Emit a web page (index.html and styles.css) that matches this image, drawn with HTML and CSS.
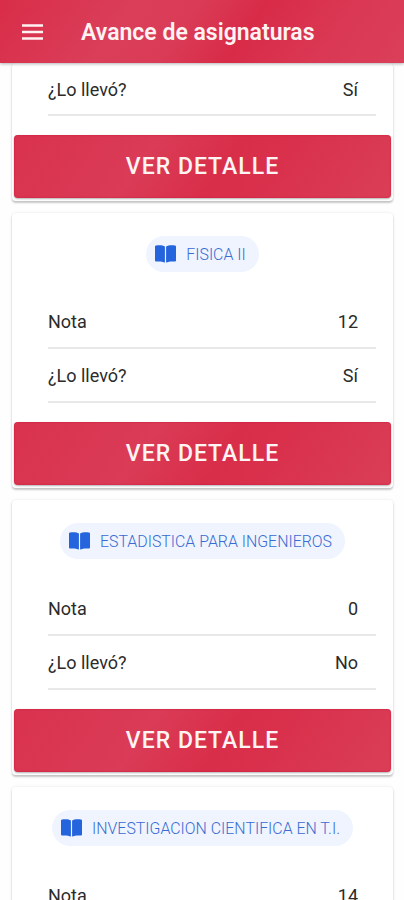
FILE: index.html
```
<!DOCTYPE html>
<html lang="es">
<head>
<meta charset="utf-8">
<title>Avance de asignaturas</title>
<link rel="stylesheet" href="styles.css">
</head>
<body>
<svg width="0" height="0" class="defs"><symbol id="book" viewBox="0 0 21 18"><path d="M0 1.600Q0 .6 1.100.5C4.500 0 8 .2 9.900 1.500V17.600C7.500 16.400 4.500 16.200 1 16.500Q0 16.500 0 15.500ZM21 1.600Q21 .6 19.900.5C16.500 0 13 .2 11.100 1.500V17.600C13.500 16.400 16.500 16.200 20 16.500Q21 16.500 21 15.500Z"/></symbol></svg>
<header class="bar">
  <svg class="menu" viewBox="0 0 21 16"><path d="M0 1.500H21M0 8H21M0 14.500H21"/></svg>
  <h1>Avance de asignaturas</h1>
</header>
<main>
  <section class="card first">
    <div class="row"><span>¿Lo llevó?</span><span>Sí</span></div>
    <button class="detail">VER DETALLE</button>
  </section>
  <section class="card">
    <div class="chip"><svg><use href="#book"/></svg><span>FISICA II</span></div>
    <div class="row"><span>Nota</span><span>12</span></div>
    <div class="row"><span>¿Lo llevó?</span><span>Sí</span></div>
    <button class="detail">VER DETALLE</button>
  </section>
  <section class="card">
    <div class="chip"><svg><use href="#book"/></svg><span>ESTADISTICA PARA INGENIEROS</span></div>
    <div class="row"><span>Nota</span><span>0</span></div>
    <div class="row"><span>¿Lo llevó?</span><span>No</span></div>
    <button class="detail">VER DETALLE</button>
  </section>
  <section class="card">
    <div class="chip"><svg><use href="#book"/></svg><span>INVESTIGACION CIENTIFICA EN T.I.</span></div>
    <div class="row"><span>Nota</span><span>14</span></div>
  </section>
</main>
</body>
</html>
```
FILE: styles.css
```
* { box-sizing: border-box; }
body {
  margin: 0;
  height: 900px;
  overflow: hidden;
  display: flex;
  flex-direction: column;
  background: #fefefe;
  font-family: Roboto, sans-serif;
  color: #2b2b2b;
}
.defs { position: absolute; }
.bar {
  position: relative;
  z-index: 1;
  flex: none;
  height: 63px;
  display: flex;
  align-items: center;
  padding: 1px 22px 0;
  gap: 38px;
  color: #fff2f3;
  background: linear-gradient(125deg, #d92d49 0%, #da3e59 30%, #da3c57 44%, #d82b48 60%, #da3854 80%, #da3f59 100%);
  box-shadow: 0 1px 3px rgba(0, 0, 0, .3);
}
.menu { width: 21px; height: 16px; fill: none; stroke: currentColor; stroke-width: 2.600; }
h1 { margin: 0; padding-top: 2px; font-size: 23px; font-weight: 600; line-height: 30px; white-space: nowrap; }
main { flex: 1; min-height: 0; overflow: hidden; padding: 0 11px 0 12px; }
.card {
  height: 275px;
  margin-bottom: 12px;
  padding: 23px 2px 3px;
  display: flex;
  flex-direction: column;
  border-radius: 4px;
  background: #fff;
  box-shadow: 0 2px 2px rgba(0, 0, 0, .2), 0 0 3px rgba(0, 0, 0, .1);
}
.first { height: 138px; padding-top: 0; }
.chip {
  flex: none;
  align-self: center;
  height: 36px;
  margin-bottom: 23px;
  padding: 0 13px 0 9px;
  display: flex;
  align-items: center;
  gap: 10px;
  border-radius: 18px;
  background: #eff4ff;
  color: #396bd2;
  font-size: 15.900px;
  font-weight: 300;
  white-space: nowrap;
}
.chip svg { width: 21px; height: 18px; margin-bottom: 1px; fill: #2464dc; }
.row {
  flex: none;
  height: 54px;
  margin: 0 15px 0 34px;
  padding: 0 18px 0 0;
  display: flex;
  align-items: center;
  justify-content: space-between;
  border-bottom: 2px solid #e8e8e8;
  font-size: 18px;
}
.first .row { padding-top: 1px; height: 53px; }
.detail {
  margin: auto 0 0;
  height: 63px;
  flex: none;
  border: 0;
  border-radius: 4px;
  padding: 0;
  color: #fff4f4;
  font: 500 23px Roboto, sans-serif;
  letter-spacing: 1px;
  background: linear-gradient(125deg, #d9324e 0%, #da3b56 35%, #d92e4a 55%, #d9304c 66%, #da3e57 100%);
  box-shadow: inset 0 0 2px #c9163b, 0 1px 2px rgba(0, 0, 0, .3);
}
```
